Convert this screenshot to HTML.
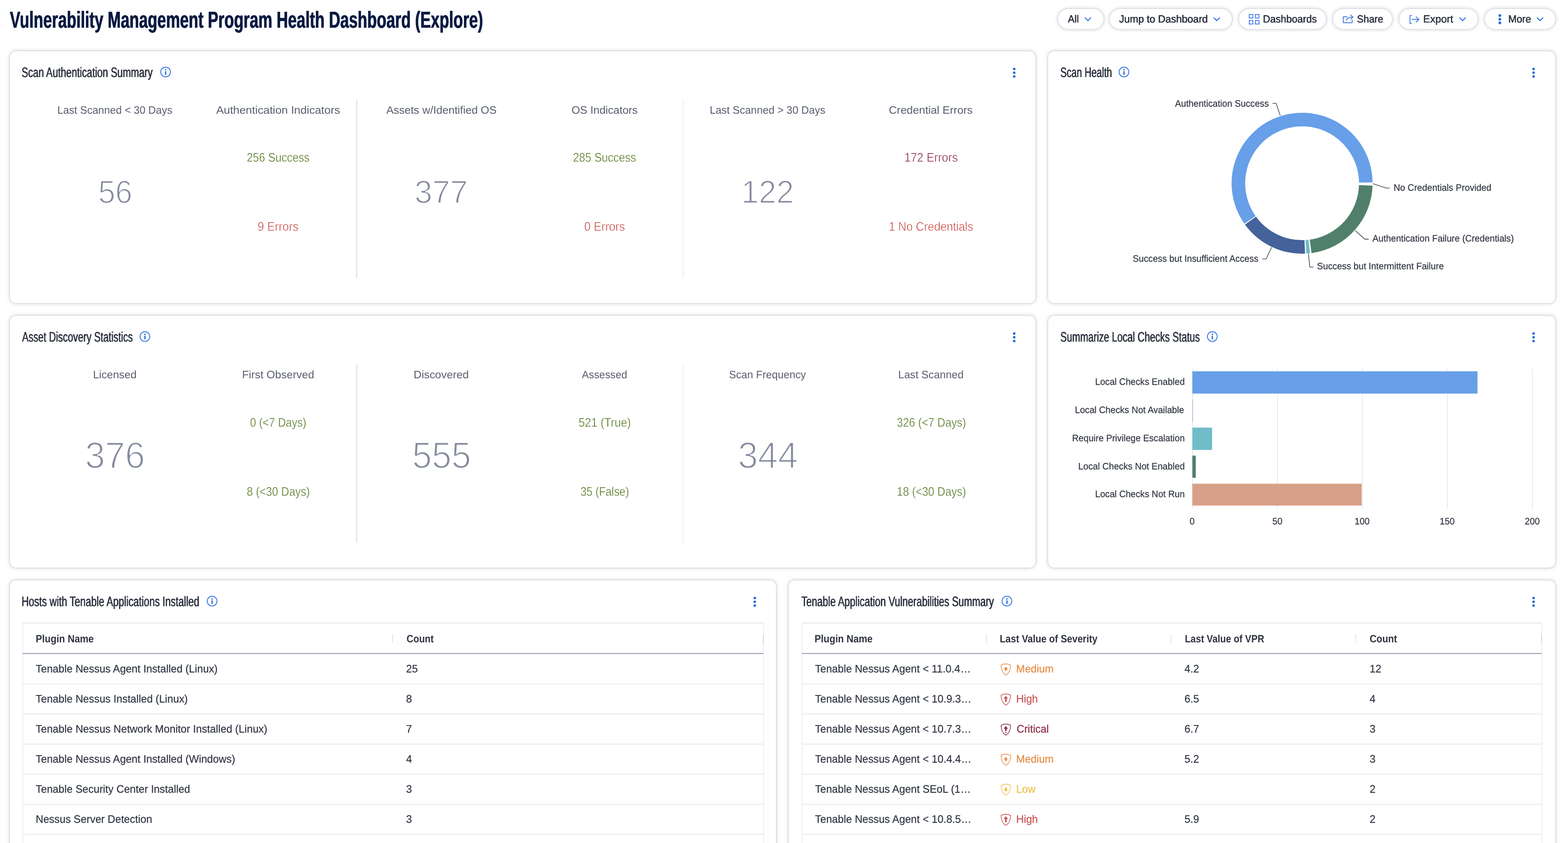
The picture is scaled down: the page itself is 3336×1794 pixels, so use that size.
<!DOCTYPE html><html lang="en"><head><meta charset="utf-8"><title>Vulnerability Management Program Health Dashboard (Explore)</title><style>
*{box-sizing:border-box;margin:0;padding:0}
html,body{width:3336px;height:1794px;background:#fff}
body{font-family:"Liberation Sans",sans-serif;position:relative;color:#2e3340;text-rendering:geometricPrecision}
#app{position:absolute;left:0;top:0;width:3336px;height:1794px;overflow:hidden;will-change:transform}
.t{position:absolute;white-space:nowrap;transform-origin:0 0;font-weight:400;display:block}
.abs{position:absolute}
.panel{position:absolute;background:#fff;border-radius:12.8px;box-shadow:0 0 2px rgba(60,70,95,.30),0 0 9px rgba(60,70,95,.30)}
.btn{position:absolute;top:19px;height:43px;border-radius:22px;background:#fff;box-shadow:0 0 2px rgba(60,70,95,.30),0 0 8px rgba(60,70,95,.30)}
svg{position:absolute;overflow:visible}
.vline{position:absolute;width:1.6px;background:#dddfe6}
.hl{position:absolute;height:1px;background:#d6d9e0}
</style></head><body><div id="app"><header><h1 class="t" style="left:21.00px;top:18.00px;font-size:49.4px;line-height:49.4px;color:#0a1b42;font-weight:700;transform:scaleX(0.6751);text-shadow:0.55px 0 0 #0a1b42,-0.55px 0 0 #0a1b42">Vulnerability Management Program Health Dashboard (Explore)</h1><div class="btn" role="button" style="left:2251px;width:97px"><span class="t" style="left:21.00px;top:11.00px;font-size:22.4px;line-height:22.4px;color:#2e3340;transform:scaleX(0.9402);text-shadow:0.3px 0 0 #2e3340,-0.3px 0 0 #2e3340">All</span><svg style="left:56.90px;top:18.00px" width="13.4" height="8.0" viewBox="0 0 13.4 8.0"><path d="M0.9 0.9 L6.7 6.9 L12.5 0.9" fill="none" stroke="#2d6fde" stroke-width="2.1" stroke-linecap="round" stroke-linejoin="round"/></svg></div><div class="btn" role="button" style="left:2361px;width:260px"><span class="t" style="left:20.00px;top:11.00px;font-size:22.4px;line-height:22.4px;color:#2e3340;transform:scaleX(0.9654);text-shadow:0.3px 0 0 #2e3340,-0.3px 0 0 #2e3340">Jump to Dashboard</span><svg style="left:221.30px;top:18.00px" width="13.4" height="8.0" viewBox="0 0 13.4 8.0"><path d="M0.9 0.9 L6.7 6.9 L12.5 0.9" fill="none" stroke="#2d6fde" stroke-width="2.1" stroke-linecap="round" stroke-linejoin="round"/></svg></div><div class="btn" role="button" style="left:2636px;width:185px"><svg style="left:20.60px;top:10.60px" width="22.4" height="22" viewBox="0 0 22.4 22" fill="none" stroke="#2d6fde" stroke-width="1.6"><rect x="0.8" y="0.8" width="7.8" height="7.6"/><rect x="13.8" y="0.8" width="7.8" height="7.6"/><rect x="0.8" y="13.6" width="7.8" height="7.6"/><rect x="13.8" y="13.6" width="7.8" height="7.6"/></svg><span class="t" style="left:51.00px;top:11.00px;font-size:22.4px;line-height:22.4px;color:#2e3340;transform:scaleX(0.9494);text-shadow:0.3px 0 0 #2e3340,-0.3px 0 0 #2e3340">Dashboards</span></div><div class="btn" role="button" style="left:2836px;width:126px"><svg style="left:20.80px;top:12.00px" width="22.4" height="18.2" viewBox="0 0 22.4 18.2" fill="none" stroke="#2d6fde" stroke-width="1.6" stroke-linecap="round" stroke-linejoin="round"><path d="M9 4.6 H1.6 Q0.8 4.6 0.8 5.4 V16.6 Q0.8 17.4 1.6 17.4 H19.0 Q19.8 17.4 19.8 16.6 V11.6"/><path d="M7.6 12.0 C8.6 7.4 13.2 5.4 21.2 5.4"/><path d="M16.6 0.8 L21.4 5.4 L16.6 10.0"/></svg><span class="t" style="left:51.00px;top:11.00px;font-size:22.4px;line-height:22.4px;color:#2e3340;transform:scaleX(0.9371);text-shadow:0.3px 0 0 #2e3340,-0.3px 0 0 #2e3340">Share</span></div><div class="btn" role="button" style="left:2977px;width:167px"><svg style="left:21.80px;top:12.60px" width="20.6" height="19" viewBox="0 0 20.6 19" fill="none" stroke="#2d6fde" stroke-width="1.6" stroke-linecap="round" stroke-linejoin="round"><path d="M4.4 0.8 H1.6 Q0.8 0.8 0.8 1.6 V17.4 Q0.8 18.2 1.6 18.2 H4.4"/><path d="M5.0 9.4 H19.6"/><path d="M13.6 3.6 L19.8 9.4 L13.6 15.2"/></svg><span class="t" style="left:51.00px;top:11.00px;font-size:22.4px;line-height:22.4px;color:#2e3340;transform:scaleX(0.9844);text-shadow:0.3px 0 0 #2e3340,-0.3px 0 0 #2e3340">Export</span><svg style="left:128.40px;top:18.00px" width="13.4" height="8.0" viewBox="0 0 13.4 8.0"><path d="M0.9 0.9 L6.7 6.9 L12.5 0.9" fill="none" stroke="#2d6fde" stroke-width="2.1" stroke-linecap="round" stroke-linejoin="round"/></svg></div><div class="btn" role="button" style="left:3159px;width:150px"><svg style="left:28.60px;top:10.90px" width="6.0" height="21.8" viewBox="0 0 6.0 21.8" fill="#2d6fde"><circle cx="3.0" cy="3.0" r="3.0"/><circle cx="3.0" cy="10.9" r="3.0"/><circle cx="3.0" cy="18.8" r="3.0"/></svg><span class="t" style="left:50.00px;top:11.00px;font-size:22.4px;line-height:22.4px;color:#2e3340;transform:scaleX(0.9508);text-shadow:0.3px 0 0 #2e3340,-0.3px 0 0 #2e3340">More</span><svg style="left:111.20px;top:18.00px" width="13.4" height="8.0" viewBox="0 0 13.4 8.0"><path d="M0.9 0.9 L6.7 6.9 L12.5 0.9" fill="none" stroke="#2d6fde" stroke-width="2.1" stroke-linecap="round" stroke-linejoin="round"/></svg></div></header><section class="panel" style="left:21px;top:109px;width:2182px;height:536px"><h2 class="t" style="left:25.00px;top:31.00px;font-size:29.4px;line-height:29.4px;color:#2e3340;font-weight:400;transform:scaleX(0.7080);text-shadow:0.42px 0 0 #2e3340,-0.42px 0 0 #2e3340">Scan Authentication Summary</h2><svg style="left:320.40px;top:33.30px" width="22.6" height="22.6" viewBox="-11.3 -11.3 22.6 22.6"><circle r="10.4" fill="none" stroke="#2d6fde" stroke-width="1.7"/><circle cy="-4.9" r="1.6" fill="#2d6fde"/><rect x="-1.4" y="-1.9" width="2.8" height="7.9" rx="0.4" fill="#2d6fde"/></svg><svg style="left:2134.00px;top:34.50px" width="5.6" height="21.6" viewBox="0 0 5.6 21.6" fill="#2d6fde"><circle cx="2.8" cy="2.8" r="2.8"/><circle cx="2.8" cy="10.8" r="2.8"/><circle cx="2.8" cy="18.8" r="2.8"/></svg><div class="vline" style="left:737.10px;top:103.2px;height:380px"></div><div class="vline" style="left:1431.70px;top:103.2px;height:380px"></div><span class="t lbl" style="left:101.00px;top:114.00px;font-size:23.0px;line-height:23.0px;color:#575d6e;transform:scaleX(0.9735)">Last Scanned &lt; 30 Days</span><span class="t lbl" style="left:439.00px;top:114.00px;font-size:23.0px;line-height:23.0px;color:#575d6e;transform:scaleX(1.0459)">Authentication Indicators</span><span class="t lbl" style="left:801.00px;top:114.00px;font-size:23.0px;line-height:23.0px;color:#575d6e;transform:scaleX(1.0137)">Assets w/Identified OS</span><span class="t lbl" style="left:1195.00px;top:114.00px;font-size:23.0px;line-height:23.0px;color:#575d6e;transform:scaleX(1.0098)">OS Indicators</span><span class="t lbl" style="left:1489.00px;top:114.00px;font-size:23.0px;line-height:23.0px;color:#575d6e;transform:scaleX(0.9790)">Last Scanned &gt; 30 Days</span><span class="t lbl" style="left:1870.00px;top:114.00px;font-size:23.0px;line-height:23.0px;color:#575d6e;transform:scaleX(1.0264)">Credential Errors</span><span class="t big" style="left:188.00px;top:266.00px;font-size:68.6px;line-height:68.6px;color:#858b9e;transform:scaleX(0.9523);-webkit-text-stroke:1.92px #fff">56</span><span class="t big" style="left:861.00px;top:266.00px;font-size:68.6px;line-height:68.6px;color:#858b9e;transform:scaleX(0.9899);-webkit-text-stroke:1.92px #fff">377</span><span class="t big" style="left:1556.00px;top:266.00px;font-size:68.6px;line-height:68.6px;color:#858b9e;transform:scaleX(0.9782);-webkit-text-stroke:1.92px #fff">122</span><span class="t sub" style="left:504.00px;top:213.00px;font-size:26.4px;line-height:26.4px;color:#4c7016;transform:scaleX(0.8835);-webkit-text-stroke:0.5px #fff">256 Success</span><span class="t sub" style="left:527.00px;top:360.00px;font-size:26.4px;line-height:26.4px;color:#c64842;transform:scaleX(0.9277);-webkit-text-stroke:0.5px #fff">9 Errors</span><span class="t sub" style="left:1198.00px;top:213.00px;font-size:26.4px;line-height:26.4px;color:#4c7016;transform:scaleX(0.8889);-webkit-text-stroke:0.5px #fff">285 Success</span><span class="t sub" style="left:1222.00px;top:360.00px;font-size:26.4px;line-height:26.4px;color:#c64842;transform:scaleX(0.9234);-webkit-text-stroke:0.5px #fff">0 Errors</span><span class="t sub" style="left:1903.00px;top:213.00px;font-size:26.4px;line-height:26.4px;color:#85253e;transform:scaleX(0.9225);-webkit-text-stroke:0.5px #fff">172 Errors</span><span class="t sub" style="left:1870.00px;top:360.00px;font-size:26.4px;line-height:26.4px;color:#c64842;transform:scaleX(0.9128);-webkit-text-stroke:0.5px #fff">1 No Credentials</span></section><section class="panel" style="left:2230px;top:109px;width:1079px;height:536px"><h2 class="t" style="left:26.00px;top:31.00px;font-size:29.4px;line-height:29.4px;color:#2e3340;font-weight:400;transform:scaleX(0.6858);text-shadow:0.42px 0 0 #2e3340,-0.42px 0 0 #2e3340">Scan Health</h2><svg style="left:150.10px;top:33.30px" width="22.6" height="22.6" viewBox="-11.3 -11.3 22.6 22.6"><circle r="10.4" fill="none" stroke="#2d6fde" stroke-width="1.7"/><circle cy="-4.9" r="1.6" fill="#2d6fde"/><rect x="-1.4" y="-1.9" width="2.8" height="7.9" rx="0.4" fill="#2d6fde"/></svg><svg style="left:1030.20px;top:34.50px" width="5.6" height="21.6" viewBox="0 0 5.6 21.6" fill="#2d6fde"><circle cx="2.8" cy="2.8" r="2.8"/><circle cx="2.8" cy="10.8" r="2.8"/><circle cx="2.8" cy="18.8" r="2.8"/></svg><svg style="left:0;top:0" width="1079" height="536" viewBox="0 0 1079 536"><path d="M417.58 367.25 A150.0 150.0 0 1 1 690.29 279.17 L661.39 279.52 A121.1 121.1 0 1 0 441.22 350.63 Z" fill="#679fe8"/><path d="M690.22 285.97 A150.0 150.0 0 0 1 560.40 429.65 L556.53 401.01 A121.1 121.1 0 0 0 661.33 285.02 Z" fill="#50806b"/><path d="M557.28 430.04 A150.0 150.0 0 0 1 549.20 430.74 L547.48 401.89 A121.1 121.1 0 0 0 554.01 401.32 Z" fill="#70bcc9"/><path d="M546.58 430.87 A150.0 150.0 0 0 1 418.79 368.96 L442.20 352.01 A121.1 121.1 0 0 0 545.37 401.99 Z" fill="#44639a"/><path d="M493.80 136.90 L485.00 110.80 L477.30 110.80" fill="none" stroke="#2e3340" stroke-width="1.3"/><path d="M691.00 281.90 L719.00 291.20 L726.70 291.20" fill="none" stroke="#2e3340" stroke-width="1.3"/><path d="M653.10 381.60 L673.90 400.00 L681.70 400.00" fill="none" stroke="#2e3340" stroke-width="1.3"/><path d="M553.70 431.30 L556.80 459.30 L564.60 459.30" fill="none" stroke="#2e3340" stroke-width="1.3"/><path d="M475.20 417.30 L463.70 442.20 L455.60 442.20" fill="none" stroke="#2e3340" stroke-width="1.3"/></svg><span class="t" style="left:270.00px;top:103.00px;font-size:19.9px;line-height:19.9px;color:#2e3340;transform:scaleX(0.9650);-webkit-text-stroke:0.25px #2e3340">Authentication Success</span><span class="t" style="left:735.00px;top:282.00px;font-size:19.9px;line-height:19.9px;color:#2e3340;transform:scaleX(0.9648);-webkit-text-stroke:0.25px #2e3340">No Credentials Provided</span><span class="t" style="left:690.00px;top:390.00px;font-size:19.9px;line-height:19.9px;color:#2e3340;transform:scaleX(0.9648);-webkit-text-stroke:0.25px #2e3340">Authentication Failure (Credentials)</span><span class="t" style="left:572.00px;top:449.00px;font-size:19.9px;line-height:19.9px;color:#2e3340;transform:scaleX(0.9648);-webkit-text-stroke:0.25px #2e3340">Success but Intermittent Failure</span><span class="t" style="left:180.00px;top:433.00px;font-size:19.9px;line-height:19.9px;color:#2e3340;transform:scaleX(0.9650);-webkit-text-stroke:0.25px #2e3340">Success but Insufficient Access</span></section><section class="panel" style="left:21px;top:672px;width:2182px;height:536px"><h2 class="t" style="left:26.00px;top:31.00px;font-size:29.4px;line-height:29.4px;color:#2e3340;font-weight:400;transform:scaleX(0.7002);text-shadow:0.42px 0 0 #2e3340,-0.42px 0 0 #2e3340">Asset Discovery Statistics</h2><svg style="left:276.40px;top:33.30px" width="22.6" height="22.6" viewBox="-11.3 -11.3 22.6 22.6"><circle r="10.4" fill="none" stroke="#2d6fde" stroke-width="1.7"/><circle cy="-4.9" r="1.6" fill="#2d6fde"/><rect x="-1.4" y="-1.9" width="2.8" height="7.9" rx="0.4" fill="#2d6fde"/></svg><svg style="left:2134.00px;top:34.50px" width="5.6" height="21.6" viewBox="0 0 5.6 21.6" fill="#2d6fde"><circle cx="2.8" cy="2.8" r="2.8"/><circle cx="2.8" cy="10.8" r="2.8"/><circle cx="2.8" cy="18.8" r="2.8"/></svg><div class="vline" style="left:737.10px;top:103.2px;height:380px"></div><div class="vline" style="left:1431.70px;top:103.2px;height:380px"></div><span class="t lbl" style="left:177.00px;top:114.00px;font-size:23.0px;line-height:23.0px;color:#575d6e;transform:scaleX(1.0058)">Licensed</span><span class="t lbl" style="left:494.00px;top:114.00px;font-size:23.0px;line-height:23.0px;color:#575d6e;transform:scaleX(1.0173)">First Observed</span><span class="t lbl" style="left:859.00px;top:114.00px;font-size:23.0px;line-height:23.0px;color:#575d6e;transform:scaleX(1.0198)">Discovered</span><span class="t lbl" style="left:1217.00px;top:114.00px;font-size:23.0px;line-height:23.0px;color:#575d6e;transform:scaleX(0.9662)">Assessed</span><span class="t lbl" style="left:1530.00px;top:114.00px;font-size:23.0px;line-height:23.0px;color:#575d6e;transform:scaleX(0.9768)">Scan Frequency</span><span class="t lbl" style="left:1890.00px;top:114.00px;font-size:23.0px;line-height:23.0px;color:#575d6e;transform:scaleX(0.9894)">Last Scanned</span><span class="t big" style="left:160.00px;top:257.00px;font-size:79.0px;line-height:79.0px;color:#858b9e;transform:scaleX(0.9671);-webkit-text-stroke:2.21px #fff">376</span><span class="t big" style="left:856.00px;top:257.00px;font-size:79.0px;line-height:79.0px;color:#858b9e;transform:scaleX(0.9490);-webkit-text-stroke:2.21px #fff">555</span><span class="t big" style="left:1549.00px;top:257.00px;font-size:79.0px;line-height:79.0px;color:#858b9e;transform:scaleX(0.9694);-webkit-text-stroke:2.21px #fff">344</span><span class="t sub" style="left:511.00px;top:214.00px;font-size:26.4px;line-height:26.4px;color:#4c7016;transform:scaleX(0.8719);-webkit-text-stroke:0.5px #fff">0 (&lt;7 Days)</span><span class="t sub" style="left:504.00px;top:361.00px;font-size:26.4px;line-height:26.4px;color:#4c7016;transform:scaleX(0.8845);-webkit-text-stroke:0.5px #fff">8 (&lt;30 Days)</span><span class="t sub" style="left:1210.00px;top:214.00px;font-size:26.4px;line-height:26.4px;color:#4c7016;transform:scaleX(0.9101);-webkit-text-stroke:0.5px #fff">521 (True)</span><span class="t sub" style="left:1214.00px;top:361.00px;font-size:26.4px;line-height:26.4px;color:#4c7016;transform:scaleX(0.8693);-webkit-text-stroke:0.5px #fff">35 (False)</span><span class="t sub" style="left:1887.00px;top:214.00px;font-size:26.4px;line-height:26.4px;color:#4c7016;transform:scaleX(0.8846);-webkit-text-stroke:0.5px #fff">326 (&lt;7 Days)</span><span class="t sub" style="left:1887.00px;top:361.00px;font-size:26.4px;line-height:26.4px;color:#4c7016;transform:scaleX(0.8846);-webkit-text-stroke:0.5px #fff">18 (&lt;30 Days)</span></section><section class="panel" style="left:2230px;top:672px;width:1079px;height:536px"><h2 class="t" style="left:26.00px;top:31.00px;font-size:29.4px;line-height:29.4px;color:#2e3340;font-weight:400;transform:scaleX(0.6987);text-shadow:0.42px 0 0 #2e3340,-0.42px 0 0 #2e3340">Summarize Local Checks Status</h2><svg style="left:337.60px;top:33.30px" width="22.6" height="22.6" viewBox="-11.3 -11.3 22.6 22.6"><circle r="10.4" fill="none" stroke="#2d6fde" stroke-width="1.7"/><circle cy="-4.9" r="1.6" fill="#2d6fde"/><rect x="-1.4" y="-1.9" width="2.8" height="7.9" rx="0.4" fill="#2d6fde"/></svg><svg style="left:1030.20px;top:34.50px" width="5.6" height="21.6" viewBox="0 0 5.6 21.6" fill="#2d6fde"><circle cx="2.8" cy="2.8" r="2.8"/><circle cx="2.8" cy="10.8" r="2.8"/><circle cx="2.8" cy="18.8" r="2.8"/></svg><svg style="left:0;top:0" width="1079" height="536" viewBox="0 0 1079 536"><rect x="306.10" y="112.30" width="1.6" height="298.50" fill="#e4e5e9"/><rect x="486.95" y="112.30" width="1.6" height="298.50" fill="#e4e5e9"/><rect x="667.80" y="112.30" width="1.6" height="298.50" fill="#e4e5e9"/><rect x="848.65" y="112.30" width="1.6" height="298.50" fill="#e4e5e9"/><rect x="1029.50" y="112.30" width="1.6" height="298.50" fill="#e4e5e9"/><rect x="306.90" y="118.20" width="606.60" height="47.40" fill="#679fe8"/><rect x="306.90" y="178.10" width="0.70" height="47.40" fill="#6f8cc4"/><rect x="306.90" y="238.00" width="41.90" height="47.50" fill="#70bcc9"/><rect x="306.90" y="297.60" width="7.10" height="47.20" fill="#50806b"/><rect x="306.90" y="357.40" width="360.10" height="46.50" fill="#d8a088"/></svg><span class="t" style="left:100.00px;top:132.00px;font-size:19.9px;line-height:19.9px;color:#2e3340;transform:scaleX(0.9631);-webkit-text-stroke:0.25px #2e3340">Local Checks Enabled</span><span class="t" style="left:57.00px;top:192.00px;font-size:19.9px;line-height:19.9px;color:#2e3340;transform:scaleX(0.9647);-webkit-text-stroke:0.25px #2e3340">Local Checks Not Available</span><span class="t" style="left:51.00px;top:252.00px;font-size:19.9px;line-height:19.9px;color:#2e3340;transform:scaleX(0.9632);-webkit-text-stroke:0.25px #2e3340">Require Privilege Escalation</span><span class="t" style="left:64.00px;top:312.00px;font-size:19.9px;line-height:19.9px;color:#2e3340;transform:scaleX(0.9668);-webkit-text-stroke:0.25px #2e3340">Local Checks Not Enabled</span><span class="t" style="left:100.00px;top:371.00px;font-size:19.9px;line-height:19.9px;color:#2e3340;transform:scaleX(0.9633);-webkit-text-stroke:0.25px #2e3340">Local Checks Not Run</span><span class="t" style="left:301.00px;top:429.00px;font-size:19.9px;line-height:19.9px;color:#2e3340;transform:scaleX(0.9648);-webkit-text-stroke:0.25px #2e3340">0</span><span class="t" style="left:477.00px;top:429.00px;font-size:19.9px;line-height:19.9px;color:#2e3340;transform:scaleX(0.9648);-webkit-text-stroke:0.25px #2e3340">50</span><span class="t" style="left:652.00px;top:429.00px;font-size:19.9px;line-height:19.9px;color:#2e3340;transform:scaleX(0.9648);-webkit-text-stroke:0.25px #2e3340">100</span><span class="t" style="left:833.00px;top:429.00px;font-size:19.9px;line-height:19.9px;color:#2e3340;transform:scaleX(0.9648);-webkit-text-stroke:0.25px #2e3340">150</span><span class="t" style="left:1014.00px;top:429.00px;font-size:19.9px;line-height:19.9px;color:#2e3340;transform:scaleX(0.9648);-webkit-text-stroke:0.25px #2e3340">200</span></section><section class="panel" style="left:21px;top:1235px;width:1630px;height:640px"><h2 class="t" style="left:25.00px;top:31.00px;font-size:29.4px;line-height:29.4px;color:#2e3340;font-weight:400;transform:scaleX(0.7149);text-shadow:0.42px 0 0 #2e3340,-0.42px 0 0 #2e3340">Hosts with Tenable Applications Installed</h2><svg style="left:418.90px;top:33.30px" width="22.6" height="22.6" viewBox="-11.3 -11.3 22.6 22.6"><circle r="10.4" fill="none" stroke="#2d6fde" stroke-width="1.7"/><circle cy="-4.9" r="1.6" fill="#2d6fde"/><rect x="-1.4" y="-1.9" width="2.8" height="7.9" rx="0.4" fill="#2d6fde"/></svg><svg style="left:1582.00px;top:34.50px" width="5.6" height="21.6" viewBox="0 0 5.6 21.6" fill="#2d6fde"><circle cx="2.8" cy="2.8" r="2.8"/><circle cx="2.8" cy="10.8" r="2.8"/><circle cx="2.8" cy="18.8" r="2.8"/></svg><div class="abs" style="left:27px;top:90px;width:1577px;height:520px;border-left:1px solid #dfe1e7;border-right:1px solid #dfe1e7;border-top:2px solid #e6e8ec"></div><div class="abs" style="left:27px;top:155px;width:1576px;height:2px;background:linear-gradient(#6d7894 0 50%,#c6cbd7 50% 100%)"></div><div class="hl" style="left:27px;top:220px;width:1577px"></div><div class="hl" style="left:27px;top:284px;width:1577px"></div><div class="hl" style="left:27px;top:348px;width:1577px"></div><div class="hl" style="left:27px;top:412px;width:1577px"></div><div class="hl" style="left:27px;top:476px;width:1577px"></div><div class="hl" style="left:27px;top:540px;width:1577px"></div><div class="abs" style="left:814px;top:115px;width:1px;height:18px;background:#cdd0d8"></div><div class="abs" style="left:1602px;top:115px;width:1px;height:18px;background:#cdd0d8"></div><div role="table"><div role="row"><strong class="t th" style="left:55.00px;top:114.00px;font-size:22.6px;line-height:22.6px;color:#2e3340;font-weight:700;transform:scaleX(0.9022)">Plugin Name</strong><strong class="t th" style="left:844.00px;top:114.00px;font-size:22.6px;line-height:22.6px;color:#2e3340;font-weight:700;transform:scaleX(0.8841)">Count</strong></div><div role="row"><span class="t" style="left:55.00px;top:177.00px;font-size:23.2px;line-height:23.2px;color:#2e3340;transform:scaleX(0.9655);-webkit-text-stroke:0.25px #2e3340">Tenable Nessus Agent Installed (Linux)</span><span class="t" style="left:843.00px;top:177.00px;font-size:23.2px;line-height:23.2px;color:#2e3340;transform:scaleX(0.9655);-webkit-text-stroke:0.25px #2e3340">25</span></div><div role="row"><span class="t" style="left:55.00px;top:241.00px;font-size:23.2px;line-height:23.2px;color:#2e3340;transform:scaleX(0.9655);-webkit-text-stroke:0.25px #2e3340">Tenable Nessus Installed (Linux)</span><span class="t" style="left:843.00px;top:241.00px;font-size:23.2px;line-height:23.2px;color:#2e3340;transform:scaleX(0.9655);-webkit-text-stroke:0.25px #2e3340">8</span></div><div role="row"><span class="t" style="left:55.00px;top:305.00px;font-size:23.2px;line-height:23.2px;color:#2e3340;transform:scaleX(0.9655);-webkit-text-stroke:0.25px #2e3340">Tenable Nessus Network Monitor Installed (Linux)</span><span class="t" style="left:843.00px;top:305.00px;font-size:23.2px;line-height:23.2px;color:#2e3340;transform:scaleX(0.9655);-webkit-text-stroke:0.25px #2e3340">7</span></div><div role="row"><span class="t" style="left:55.00px;top:369.00px;font-size:23.2px;line-height:23.2px;color:#2e3340;transform:scaleX(0.9655);-webkit-text-stroke:0.25px #2e3340">Tenable Nessus Agent Installed (Windows)</span><span class="t" style="left:843.00px;top:369.00px;font-size:23.2px;line-height:23.2px;color:#2e3340;transform:scaleX(0.9655);-webkit-text-stroke:0.25px #2e3340">4</span></div><div role="row"><span class="t" style="left:55.00px;top:433.00px;font-size:23.2px;line-height:23.2px;color:#2e3340;transform:scaleX(0.9655);-webkit-text-stroke:0.25px #2e3340">Tenable Security Center Installed</span><span class="t" style="left:843.00px;top:433.00px;font-size:23.2px;line-height:23.2px;color:#2e3340;transform:scaleX(0.9655);-webkit-text-stroke:0.25px #2e3340">3</span></div><div role="row"><span class="t" style="left:55.00px;top:497.00px;font-size:23.2px;line-height:23.2px;color:#2e3340;transform:scaleX(0.9655);-webkit-text-stroke:0.25px #2e3340">Nessus Server Detection</span><span class="t" style="left:843.00px;top:497.00px;font-size:23.2px;line-height:23.2px;color:#2e3340;transform:scaleX(0.9655);-webkit-text-stroke:0.25px #2e3340">3</span></div></div></section><section class="panel" style="left:1678px;top:1235px;width:1631px;height:640px"><h2 class="t" style="left:27.00px;top:31.00px;font-size:29.4px;line-height:29.4px;color:#2e3340;font-weight:400;transform:scaleX(0.7095);text-shadow:0.42px 0 0 #2e3340,-0.42px 0 0 #2e3340">Tenable Application Vulnerabilities Summary</h2><svg style="left:453.20px;top:33.30px" width="22.6" height="22.6" viewBox="-11.3 -11.3 22.6 22.6"><circle r="10.4" fill="none" stroke="#2d6fde" stroke-width="1.7"/><circle cy="-4.9" r="1.6" fill="#2d6fde"/><rect x="-1.4" y="-1.9" width="2.8" height="7.9" rx="0.4" fill="#2d6fde"/></svg><svg style="left:1582.20px;top:34.50px" width="5.6" height="21.6" viewBox="0 0 5.6 21.6" fill="#2d6fde"><circle cx="2.8" cy="2.8" r="2.8"/><circle cx="2.8" cy="10.8" r="2.8"/><circle cx="2.8" cy="18.8" r="2.8"/></svg><div class="abs" style="left:28px;top:90px;width:1575px;height:520px;border-left:1px solid #dfe1e7;border-right:1px solid #dfe1e7;border-top:2px solid #e6e8ec"></div><div class="abs" style="left:28px;top:155px;width:1574px;height:2px;background:linear-gradient(#6d7894 0 50%,#c6cbd7 50% 100%)"></div><div class="hl" style="left:28px;top:220px;width:1575px"></div><div class="hl" style="left:28px;top:284px;width:1575px"></div><div class="hl" style="left:28px;top:348px;width:1575px"></div><div class="hl" style="left:28px;top:412px;width:1575px"></div><div class="hl" style="left:28px;top:476px;width:1575px"></div><div class="hl" style="left:28px;top:540px;width:1575px"></div><div class="abs" style="left:420px;top:115px;width:1px;height:18px;background:#cdd0d8"></div><div class="abs" style="left:813px;top:115px;width:1px;height:18px;background:#cdd0d8"></div><div class="abs" style="left:1206px;top:115px;width:1px;height:18px;background:#cdd0d8"></div><div class="abs" style="left:1601px;top:115px;width:1px;height:18px;background:#cdd0d8"></div><div role="table"><div role="row"><strong class="t th" style="left:55.00px;top:114.00px;font-size:22.6px;line-height:22.6px;color:#2e3340;font-weight:700;transform:scaleX(0.9022)">Plugin Name</strong><strong class="t th" style="left:449.00px;top:114.00px;font-size:22.6px;line-height:22.6px;color:#2e3340;font-weight:700;transform:scaleX(0.8901)">Last Value of Severity</strong><strong class="t th" style="left:843.00px;top:114.00px;font-size:22.6px;line-height:22.6px;color:#2e3340;font-weight:700;transform:scaleX(0.8783)">Last Value of VPR</strong><strong class="t th" style="left:1236.00px;top:114.00px;font-size:22.6px;line-height:22.6px;color:#2e3340;font-weight:700;transform:scaleX(0.8934)">Count</strong></div><div role="row"><span class="t" style="left:56.00px;top:177.00px;font-size:23.2px;line-height:23.2px;color:#2e3340;transform:scaleX(0.9655);-webkit-text-stroke:0.25px #2e3340">Tenable Nessus Agent &lt; 11.0.4…</span><svg style="left:450.80px;top:176.80px" width="22" height="25.4" viewBox="0 0 22 25.4"><path d="M11 0.8 C7.6 0.8 3.6 2.0 0.8 3.7 C0.9 8.4 1.9 13.2 3.8 17.0 C5.6 20.6 8.3 23.0 11 24.6 C13.7 23.0 16.4 20.6 18.2 17.0 C20.1 13.2 21.1 8.4 21.2 3.7 C18.4 2.0 14.4 0.8 11 0.8 Z" fill="none" stroke="#e58c45" stroke-width="1.4" stroke-linejoin="round"/><path d="M11 6.6 L15.5 12.2 H12.7 V16 H9.3 V12.2 H6.5 Z" fill="#e58c45"/></svg><span class="t" style="left:484.00px;top:177.00px;font-size:23.2px;line-height:23.2px;color:#e58c45;transform:scaleX(0.9655);-webkit-text-stroke:0.25px #e58c45">Medium</span><span class="t" style="left:842.00px;top:177.00px;font-size:23.2px;line-height:23.2px;color:#2e3340;transform:scaleX(0.9655);-webkit-text-stroke:0.25px #2e3340">4.2</span><span class="t" style="left:1236.00px;top:177.00px;font-size:23.2px;line-height:23.2px;color:#2e3340;transform:scaleX(0.9655);-webkit-text-stroke:0.25px #2e3340">12</span></div><div role="row"><span class="t" style="left:56.00px;top:241.00px;font-size:23.2px;line-height:23.2px;color:#2e3340;transform:scaleX(0.9655);-webkit-text-stroke:0.25px #2e3340">Tenable Nessus Agent &lt; 10.9.3…</span><svg style="left:450.80px;top:240.80px" width="22" height="25.4" viewBox="0 0 22 25.4"><path d="M11 0.8 C7.6 0.8 3.6 2.0 0.8 3.7 C0.9 8.4 1.9 13.2 3.8 17.0 C5.6 20.6 8.3 23.0 11 24.6 C13.7 23.0 16.4 20.6 18.2 17.0 C20.1 13.2 21.1 8.4 21.2 3.7 C18.4 2.0 14.4 0.8 11 0.8 Z" fill="none" stroke="#c9504f" stroke-width="1.4" stroke-linejoin="round"/><path d="M11 5.0 L15.5 10.8 H12.7 V17.8 H9.3 V10.8 H6.5 Z" fill="#c9504f"/></svg><span class="t" style="left:484.00px;top:241.00px;font-size:23.2px;line-height:23.2px;color:#c9504f;transform:scaleX(0.9655);-webkit-text-stroke:0.25px #c9504f">High</span><span class="t" style="left:842.00px;top:241.00px;font-size:23.2px;line-height:23.2px;color:#2e3340;transform:scaleX(0.9655);-webkit-text-stroke:0.25px #2e3340">6.5</span><span class="t" style="left:1236.00px;top:241.00px;font-size:23.2px;line-height:23.2px;color:#2e3340;transform:scaleX(0.9655);-webkit-text-stroke:0.25px #2e3340">4</span></div><div role="row"><span class="t" style="left:56.00px;top:305.00px;font-size:23.2px;line-height:23.2px;color:#2e3340;transform:scaleX(0.9655);-webkit-text-stroke:0.25px #2e3340">Tenable Nessus Agent &lt; 10.7.3…</span><svg style="left:450.80px;top:304.80px" width="22" height="25.4" viewBox="0 0 22 25.4"><path d="M11 0.8 C7.6 0.8 3.6 2.0 0.8 3.7 C0.9 8.4 1.9 13.2 3.8 17.0 C5.6 20.6 8.3 23.0 11 24.6 C13.7 23.0 16.4 20.6 18.2 17.0 C20.1 13.2 21.1 8.4 21.2 3.7 C18.4 2.0 14.4 0.8 11 0.8 Z" fill="none" stroke="#8a2a42" stroke-width="1.4" stroke-linejoin="round"/><path d="M11 4.9 L15.5 10.8 H12.7 V15.4 H9.3 V10.8 H6.5 Z M9.1 17.4 H12.9 V18.9 H9.1 Z" fill="#8a2a42"/></svg><span class="t" style="left:485.00px;top:305.00px;font-size:23.2px;line-height:23.2px;color:#8a2a42;transform:scaleX(0.9655);-webkit-text-stroke:0.25px #8a2a42">Critical</span><span class="t" style="left:842.00px;top:305.00px;font-size:23.2px;line-height:23.2px;color:#2e3340;transform:scaleX(0.9655);-webkit-text-stroke:0.25px #2e3340">6.7</span><span class="t" style="left:1236.00px;top:305.00px;font-size:23.2px;line-height:23.2px;color:#2e3340;transform:scaleX(0.9655);-webkit-text-stroke:0.25px #2e3340">3</span></div><div role="row"><span class="t" style="left:56.00px;top:369.00px;font-size:23.2px;line-height:23.2px;color:#2e3340;transform:scaleX(0.9655);-webkit-text-stroke:0.25px #2e3340">Tenable Nessus Agent &lt; 10.4.4…</span><svg style="left:450.80px;top:368.80px" width="22" height="25.4" viewBox="0 0 22 25.4"><path d="M11 0.8 C7.6 0.8 3.6 2.0 0.8 3.7 C0.9 8.4 1.9 13.2 3.8 17.0 C5.6 20.6 8.3 23.0 11 24.6 C13.7 23.0 16.4 20.6 18.2 17.0 C20.1 13.2 21.1 8.4 21.2 3.7 C18.4 2.0 14.4 0.8 11 0.8 Z" fill="none" stroke="#e58c45" stroke-width="1.4" stroke-linejoin="round"/><path d="M11 6.6 L15.5 12.2 H12.7 V16 H9.3 V12.2 H6.5 Z" fill="#e58c45"/></svg><span class="t" style="left:484.00px;top:369.00px;font-size:23.2px;line-height:23.2px;color:#e58c45;transform:scaleX(0.9655);-webkit-text-stroke:0.25px #e58c45">Medium</span><span class="t" style="left:842.00px;top:369.00px;font-size:23.2px;line-height:23.2px;color:#2e3340;transform:scaleX(0.9655);-webkit-text-stroke:0.25px #2e3340">5.2</span><span class="t" style="left:1236.00px;top:369.00px;font-size:23.2px;line-height:23.2px;color:#2e3340;transform:scaleX(0.9655);-webkit-text-stroke:0.25px #2e3340">3</span></div><div role="row"><span class="t" style="left:56.00px;top:433.00px;font-size:23.2px;line-height:23.2px;color:#2e3340;transform:scaleX(0.9655);-webkit-text-stroke:0.25px #2e3340">Tenable Nessus Agent SEoL (1…</span><svg style="left:450.80px;top:432.80px" width="22" height="25.4" viewBox="0 0 22 25.4"><path d="M11 0.8 C7.6 0.8 3.6 2.0 0.8 3.7 C0.9 8.4 1.9 13.2 3.8 17.0 C5.6 20.6 8.3 23.0 11 24.6 C13.7 23.0 16.4 20.6 18.2 17.0 C20.1 13.2 21.1 8.4 21.2 3.7 C18.4 2.0 14.4 0.8 11 0.8 Z" fill="none" stroke="#f0c04a" stroke-width="1.4" stroke-linejoin="round"/><path d="M11 17.0 L15.5 11.4 H12.7 V7.6 H9.3 V11.4 H6.5 Z" fill="#f0c04a"/></svg><span class="t" style="left:484.00px;top:433.00px;font-size:23.2px;line-height:23.2px;color:#f0c04a;transform:scaleX(0.9655);-webkit-text-stroke:0.25px #f0c04a">Low</span><span class="t" style="left:1236.00px;top:433.00px;font-size:23.2px;line-height:23.2px;color:#2e3340;transform:scaleX(0.9655);-webkit-text-stroke:0.25px #2e3340">2</span></div><div role="row"><span class="t" style="left:56.00px;top:497.00px;font-size:23.2px;line-height:23.2px;color:#2e3340;transform:scaleX(0.9655);-webkit-text-stroke:0.25px #2e3340">Tenable Nessus Agent &lt; 10.8.5…</span><svg style="left:450.80px;top:496.80px" width="22" height="25.4" viewBox="0 0 22 25.4"><path d="M11 0.8 C7.6 0.8 3.6 2.0 0.8 3.7 C0.9 8.4 1.9 13.2 3.8 17.0 C5.6 20.6 8.3 23.0 11 24.6 C13.7 23.0 16.4 20.6 18.2 17.0 C20.1 13.2 21.1 8.4 21.2 3.7 C18.4 2.0 14.4 0.8 11 0.8 Z" fill="none" stroke="#c9504f" stroke-width="1.4" stroke-linejoin="round"/><path d="M11 5.0 L15.5 10.8 H12.7 V17.8 H9.3 V10.8 H6.5 Z" fill="#c9504f"/></svg><span class="t" style="left:484.00px;top:497.00px;font-size:23.2px;line-height:23.2px;color:#c9504f;transform:scaleX(0.9655);-webkit-text-stroke:0.25px #c9504f">High</span><span class="t" style="left:842.00px;top:497.00px;font-size:23.2px;line-height:23.2px;color:#2e3340;transform:scaleX(0.9655);-webkit-text-stroke:0.25px #2e3340">5.9</span><span class="t" style="left:1236.00px;top:497.00px;font-size:23.2px;line-height:23.2px;color:#2e3340;transform:scaleX(0.9655);-webkit-text-stroke:0.25px #2e3340">2</span></div></div></section></div></body></html>
